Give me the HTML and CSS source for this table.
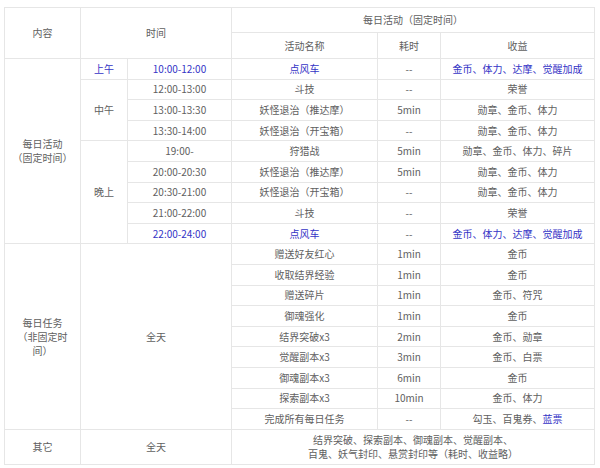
FILE: index.html
```html
<!DOCTYPE html>
<html lang="zh-CN">
<head>
<meta charset="utf-8">
<title>每日活动</title>
<link rel="stylesheet" href="styles.css">
</head>
<body>
<div class="wrap">
<table class="sched">
  <colgroup>
    <col class="c1"><col class="c2"><col class="c3"><col class="c4"><col class="c5"><col class="c6">
  </colgroup>
  <tr class="h1">
    <td rowspan="2">内容</td>
    <td rowspan="2" colspan="2">时间</td>
    <td colspan="3">每日活动（固定时间）</td>
  </tr>
  <tr class="h2">
    <td>活动名称</td>
    <td>耗时</td>
    <td>收益</td>
  </tr>
  <tr class="r">
    <td rowspan="9" class="cat">每日活动<br>（固定时间）</td>
    <td class="blue">上午</td>
    <td class="blue">10:00-12:00</td>
    <td class="blue">点风车</td>
    <td>--</td>
    <td class="blue">金币、体力、达摩、觉醒加成</td>
  </tr>
  <tr class="r">
    <td rowspan="3">中午</td>
    <td>12:00-13:00</td>
    <td>斗技</td>
    <td>--</td>
    <td>荣誉</td>
  </tr>
  <tr class="r">
    <td>13:00-13:30</td>
    <td>妖怪退治（推达摩）</td>
    <td>5min</td>
    <td>勋章、金币、体力</td>
  </tr>
  <tr class="r">
    <td>13:30-14:00</td>
    <td>妖怪退治（开宝箱）</td>
    <td>--</td>
    <td>勋章、金币、体力</td>
  </tr>
  <tr class="r">
    <td rowspan="5">晚上</td>
    <td>19:00-</td>
    <td>狩猎战</td>
    <td>5min</td>
    <td>勋章、金币、体力、碎片</td>
  </tr>
  <tr class="r">
    <td>20:00-20:30</td>
    <td>妖怪退治（推达摩）</td>
    <td>5min</td>
    <td>勋章、金币、体力</td>
  </tr>
  <tr class="r">
    <td>20:30-21:00</td>
    <td>妖怪退治（开宝箱）</td>
    <td>--</td>
    <td>勋章、金币、体力</td>
  </tr>
  <tr class="r">
    <td>21:00-22:00</td>
    <td>斗技</td>
    <td>--</td>
    <td>荣誉</td>
  </tr>
  <tr class="r">
    <td class="blue">22:00-24:00</td>
    <td class="blue">点风车</td>
    <td>--</td>
    <td class="blue">金币、体力、达摩、觉醒加成</td>
  </tr>
  <tr class="r">
    <td rowspan="9" class="cat">每日任务<br>（非固定时<br>间）</td>
    <td rowspan="9" colspan="2">全天</td>
    <td>赠送好友红心</td>
    <td>1min</td>
    <td>金币</td>
  </tr>
  <tr class="r"><td>收取结界经验</td><td>1min</td><td>金币</td></tr>
  <tr class="r"><td>赠送碎片</td><td>1min</td><td>金币、符咒</td></tr>
  <tr class="r"><td>御魂强化</td><td>1min</td><td>金币</td></tr>
  <tr class="r"><td>结界突破x3</td><td>2min</td><td>金币、勋章</td></tr>
  <tr class="r"><td>觉醒副本x3</td><td>3min</td><td>金币、白票</td></tr>
  <tr class="r"><td>御魂副本x3</td><td>6min</td><td>金币</td></tr>
  <tr class="r"><td>探索副本x3</td><td>10min</td><td>金币、体力</td></tr>
  <tr class="r"><td>完成所有每日任务</td><td>--</td><td>勾玉、百鬼券、<span class="blue">蓝票</span></td></tr>
  <tr class="other">
    <td>其它</td>
    <td colspan="2">全天</td>
    <td colspan="3" class="multi">结界突破、探索副本、御魂副本、觉醒副本、<br>百鬼、妖气封印、悬赏封印等（耗时、收益略）</td>
  </tr>
</table>
</div>
</body>
</html>
```

FILE: styles.css
```css
html, body {
  margin: 0;
  padding: 0;
  background: #ffffff;
}

.wrap {
  padding: 7px 0 0 4px;
}

.sched {
  border-collapse: collapse;
  table-layout: fixed;
  width: 590px;
  font-family: "Noto Sans CJK SC", "Noto Sans", sans-serif;
  font-size: 10px;
  line-height: 14px;
  color: #606060;
  text-spacing-trim: space-all;
}

.c1 { width: 76px; }
.c2 { width: 47px; }
.c3 { width: 104px; }
.c4 { width: 146px; }
.c5 { width: 63px; }
.c6 { width: 154px; }

.sched td {
  border: 1px solid #e6e6e6;
  text-align: center;
  vertical-align: middle;
  padding: 0 2px;
  white-space: nowrap;
}

.h1 { height: 25px; }
.h2 { height: 26px; }
.r { height: 20.6px; }
.other { height: 35px; }

.cat {
  line-height: 14px;
}

.multi {
  line-height: 13.5px;
}

.blue {
  color: #3434c6;
}
```
